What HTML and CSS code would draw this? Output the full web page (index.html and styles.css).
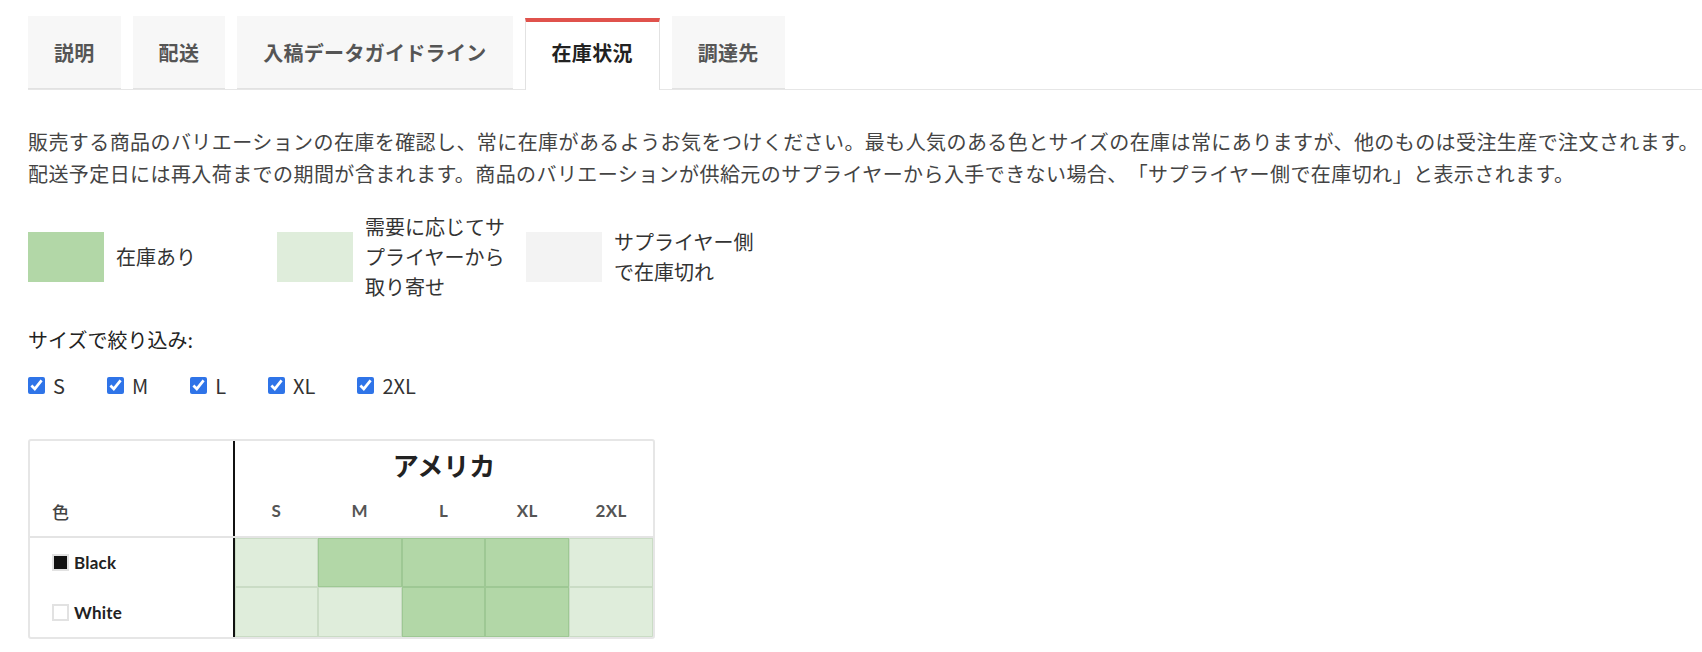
FILE: index.html
```html
<!DOCTYPE html>
<html lang="ja">
<head>
<meta charset="utf-8">
<title>在庫状況</title>
<link rel="stylesheet" href="styles.css">
</head>
<body>
<div class="page">
  <div class="tabs">
    <div class="tab">説明</div>
    <div class="tab">配送</div>
    <div class="tab">入稿データガイドライン</div>
    <div class="tab tab-active">在庫状況</div>
    <div class="tab">調達先</div>
  </div>

  <p class="intro">販売する商品のバリエーションの在庫を確認し、常に在庫があるようお気をつけください。最も人気のある色とサイズの在庫は常にありますが、他のものは受注生産で注文されます。<br>配送予定日には再入荷までの期間が含まれます。商品のバリエーションが供給元のサプライヤーから入手できない場合、「サプライヤー側で在庫切れ」と表示されます。</p>

  <div class="legend">
    <div class="legend-item">
      <span class="legend-swatch sw-in"></span>
      <span class="legend-text">在庫あり</span>
    </div>
    <div class="legend-item">
      <span class="legend-swatch sw-order"></span>
      <span class="legend-text">需要に応じてサプライヤーから取り寄せ</span>
    </div>
    <div class="legend-item">
      <span class="legend-swatch sw-out"></span>
      <span class="legend-text">サプライヤー側で在庫切れ</span>
    </div>
  </div>

  <div class="filter-label">サイズで絞り込み:</div>
  <div class="filters">
    <label class="filter"><input type="checkbox" checked><span>S</span></label>
    <label class="filter"><input type="checkbox" checked><span>M</span></label>
    <label class="filter"><input type="checkbox" checked><span>L</span></label>
    <label class="filter"><input type="checkbox" checked><span>XL</span></label>
    <label class="filter"><input type="checkbox" checked><span>2XL</span></label>
  </div>

  <div class="table-wrap">
    <table class="stock">
      <thead>
        <tr class="region-row">
          <th class="color-col" rowspan="2"><span class="color-head">色</span></th>
          <th class="region" colspan="5">アメリカ</th>
        </tr>
        <tr class="size-row">
          <th class="size">S</th>
          <th class="size">M</th>
          <th class="size">L</th>
          <th class="size">XL</th>
          <th class="size">2XL</th>
        </tr>
      </thead>
      <tbody>
        <tr>
          <td class="color-col"><span class="color-name"><span class="chip chip-black"></span>Black</span></td>
          <td class="cell light"></td>
          <td class="cell dark"></td>
          <td class="cell dark"></td>
          <td class="cell dark"></td>
          <td class="cell light"></td>
        </tr>
        <tr>
          <td class="color-col"><span class="color-name"><span class="chip chip-white"></span>White</span></td>
          <td class="cell light"></td>
          <td class="cell light"></td>
          <td class="cell dark"></td>
          <td class="cell dark"></td>
          <td class="cell light"></td>
        </tr>
      </tbody>
    </table>
  </div>
</div>
</body>
</html>
```

FILE: styles.css
```css
* { box-sizing: border-box; }

html, body {
  margin: 0;
  background: #fff;
}

body {
  font-family: "Noto Sans CJK JP", "Noto Sans", sans-serif;
  color: #333;
}

.page {
  padding: 16px 0 0 28px;
}

/* Tabs */
.tabs {
  display: flex;
  align-items: flex-end;
  gap: 12px;
  height: 74px;
  border-bottom: 1px solid #e6e6e6;
}

.tab {
  height: 73px;
  display: flex;
  align-items: center;
  padding: 0 26px;
  background: #f7f7f7;
  border-bottom: 1px solid #e2e2e2;
  font-size: 20px;
  font-weight: 700;
  color: #555;
  letter-spacing: 0.3px;
  white-space: nowrap;
}

.tab-active {
  height: 72px;
  margin-bottom: -1px;
  padding-bottom: 7px;
  background: #fff;
  border: 1px solid #e2e2e2;
  border-top: 4px solid #e0524c;
  border-bottom: 0;
  color: #222;
}

/* Intro */
.intro {
  margin: 36px 0 0;
  font-size: 20px;
  line-height: 32px;
  letter-spacing: 0.42px;
  text-spacing-trim: space-all;
  white-space: nowrap;
  color: #444;
}

/* Legend */
.legend {
  display: flex;
  align-items: center;
  margin-top: 22px;
}

.legend-item {
  display: flex;
  align-items: center;
  width: 249px;
}

.legend-swatch {
  flex: none;
  width: 76px;
  height: 50px;
  margin-right: 12px;
}

.sw-in { background: #b2d7a7; }
.sw-order { background: #dfeddb; }
.sw-out { background: #f3f3f3; }

.legend-text {
  width: 152px;
  font-size: 20px;
  line-height: 30px;
  color: #333;
}

/* Filters */
.filter-label {
  margin-top: 23px;
  font-size: 20px;
  line-height: 30px;
  color: #222;
}

.filters {
  display: flex;
  align-items: center;
  margin-top: 15px;
  height: 30px;
}

.filter {
  display: flex;
  align-items: center;
  margin-right: 42px;
  font-size: 20px;
  color: #333;
}

.filter input {
  width: 17px;
  height: 17px;
  margin: 0 8px 0 0;
  accent-color: #2f74e8;
}

/* Table */
.table-wrap {
  margin-top: 39px;
  width: 627px;
  border: 2px solid #e6e6e6;
  border-radius: 3px;
  overflow: hidden;
}

.stock {
  width: 100%;
  border-collapse: collapse;
  table-layout: fixed;
  font-family: "Lato", "Noto Sans CJK JP", sans-serif;
}

.stock th.color-col,
.stock td.color-col {
  width: 204px;
  border-right: 2px solid #111;
  text-align: left;
  padding: 0 0 0 22px;
}

.stock thead th.color-col {
  vertical-align: bottom;
  padding-bottom: 12px;
  border-bottom: 2px solid #e4e4e4;
}

.color-head {
  font-family: "Noto Sans CJK JP", sans-serif;
  font-size: 17px;
  font-weight: 500;
  color: #444;
}

.region-row th.region {
  height: 44px;
  padding-top: 4px;
  font-family: "Noto Sans CJK JP", sans-serif;
  font-size: 26px;
  font-weight: 700;
  color: #222;
  text-align: center;
}

.size-row th.size {
  height: 52px;
  border-bottom: 2px solid #e4e4e4;
  font-size: 17px;
  font-weight: 700;
  letter-spacing: 0.3px;
  color: #555;
  text-align: center;
}

.stock tbody td {
  height: 50px;
  padding: 0;
}

.color-name {
  display: flex;
  align-items: center;
  font-size: 17px;
  font-weight: 700;
  letter-spacing: 0.2px;
  color: #222;
}

.chip {
  width: 17px;
  height: 17px;
  margin-right: 5px;
  border: 2px solid #e2e2e2;
}

.chip-black { background: #111; }
.chip-white { background: #fff; }

.cell.dark {
  background: #b2d7a7;
  box-shadow: inset 0 0 0 1px #9ec894;
}

.cell.light {
  background: #dfeddb;
  box-shadow: inset 0 0 0 1px #cadcc5;
}
```
